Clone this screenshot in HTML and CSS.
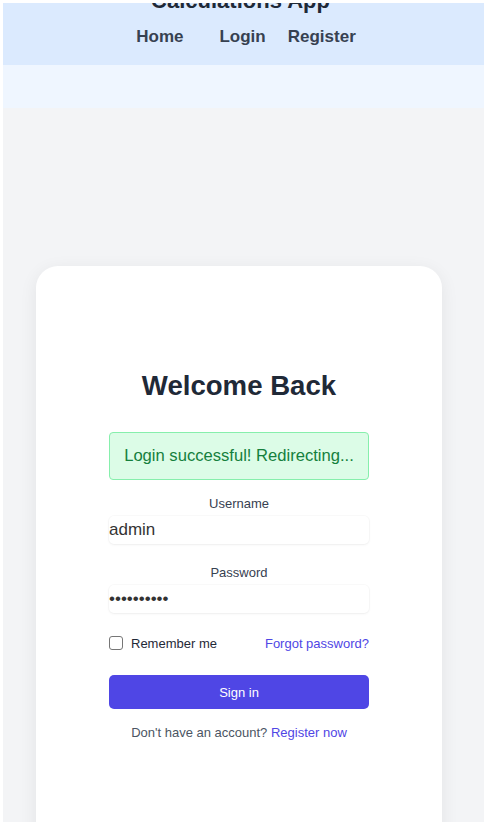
FILE: index.html
```html
<!DOCTYPE html>
<html lang="en">
<head>
<meta charset="utf-8">
<title>Calculations App - Login</title>
<link rel="stylesheet" href="styles.css">
</head>
<body>
<div class="frame">
  <div class="app">
    <header class="header">
      <h1 class="brand">Calculations App</h1>
      <nav class="nav">
        <a class="nav-link nav-home" href="#">Home</a>
        <a class="nav-link nav-login" href="#">Login</a>
        <a class="nav-link" href="#">Register</a>
      </nav>
    </header>
    <div class="band"></div>
    <main class="main">
      <section class="card">
        <h2 class="title">Welcome Back</h2>
        <div class="alert">Login successful! Redirecting...</div>
        <form class="form">
          <label class="label" for="username">Username</label>
          <input class="input" id="username" type="text" value="admin">
          <label class="label label-gap" for="password">Password</label>
          <input class="input" id="password" type="password" value="password12">
          <div class="row">
            <label class="remember"><input class="check" type="checkbox"><span>Remember me</span></label>
            <a class="link" href="#">Forgot password?</a>
          </div>
          <button class="btn" type="button">Sign in</button>
          <p class="foot">Don't have an account? <a class="link" href="#">Register now</a></p>
        </form>
      </section>
    </main>
  </div>
</div>
</body>
</html>
```
FILE: styles.css
```css
html, body {
  margin: 0;
  padding: 0;
  background: #ffffff;
}

.frame {
  padding: 3px 0 0 3px;
}

.app {
  width: 481px;
  height: 819px;
  overflow: hidden;
  background: #f3f4f6;
  font-family: "Liberation Sans", Arial, sans-serif;
  color: #1f2937;
}

.header {
  background: #dbeafe;
  height: 62px;
  display: flex;
  flex-direction: column;
  align-items: center;
}

.brand {
  margin: -14px 0 0 -6px;
  font-size: 22px;
  line-height: 24px;
  font-weight: 700;
  color: #1f2937;
}

.nav {
  margin-top: 14px;
  margin-left: 5px;
  display: flex;
  align-items: center;
}

.nav-link {
  font-size: 17px;
  line-height: 20px;
  font-weight: 700;
  color: #374151;
  text-decoration: none;
}

.nav-home {
  margin-right: 36px;
}

.nav-login {
  margin-right: 22px;
}

.band {
  height: 43px;
  background: #eff6ff;
}

.main {
  padding-top: 158px;
}

.card {
  margin-left: 33px;
  width: 406px;
  height: 700px;
  box-sizing: border-box;
  background: #ffffff;
  border-radius: 22px;
  box-shadow: 0 4px 18px rgba(0, 0, 0, 0.07);
  padding: 103px 73px 0;
}

.title {
  margin: 0;
  text-align: center;
  font-size: 27.6px;
  line-height: 34px;
  font-weight: 700;
  color: #1f2937;
}

.alert {
  margin-top: 29px;
  height: 48px;
  box-sizing: border-box;
  padding: 13px 0;
  border: 1px solid #86efac;
  border-radius: 4px;
  background: #dcfce7;
  color: #15803d;
  font-size: 16.6px;
  line-height: 20px;
  text-align: center;
}

.form {
  display: flex;
  flex-direction: column;
}

.label {
  margin-top: 14px;
  font-size: 13px;
  line-height: 20px;
  color: #374151;
  text-align: center;
}

.label-gap {
  margin-top: 19px;
}

.input {
  margin-top: 2px;
  height: 28px;
  box-sizing: border-box;
  padding: 0;
  border: none;
  border-radius: 5px;
  background: #ffffff;
  box-shadow: 0 0 0 1px rgba(0, 0, 0, 0.02), 0 1px 3px rgba(0, 0, 0, 0.05);
  font-family: "Liberation Sans", Arial, sans-serif;
  font-size: 17px;
  color: #333333;
  outline: none;
}

.row {
  margin-top: 20px;
  height: 20px;
  display: flex;
  align-items: center;
  justify-content: space-between;
  font-size: 13px;
}

.remember {
  display: flex;
  align-items: center;
  gap: 8px;
  color: #1f2937;
}

.check {
  appearance: none;
  -webkit-appearance: none;
  margin: 0;
  width: 14px;
  height: 14px;
  box-sizing: border-box;
  border: 1px solid #767676;
  border-radius: 3px;
  background: #ffffff;
}

.link {
  color: #4f46e5;
  text-decoration: none;
}

.btn {
  margin-top: 22px;
  height: 34px;
  border: none;
  border-radius: 5px;
  background: #4f46e5;
  color: #ffffff;
  font-family: "Liberation Sans", Arial, sans-serif;
  font-size: 13px;
}

.foot {
  margin: 14px 0 0;
  font-size: 13px;
  line-height: 20px;
  color: #4b5563;
  text-align: center;
}
```
